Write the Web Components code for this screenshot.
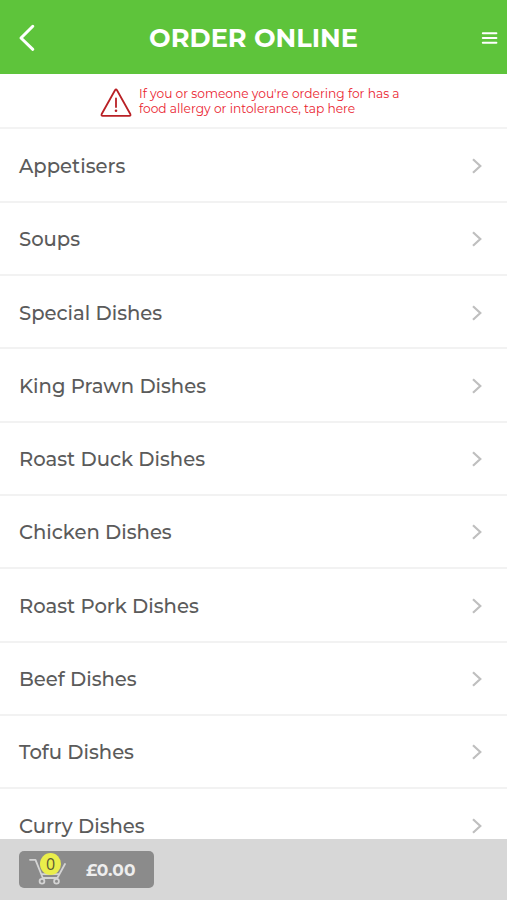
<!DOCTYPE html>
<html lang="en">
<head>
<meta charset="utf-8">
<title>Order Online</title>
<style>
html, body { margin: 0; height: 100%; overflow: hidden; background: #fff; }
body { font-family: Montserrat, Inter, "Liberation Sans", sans-serif; }
</style>
</head>
<body>
<order-app></order-app>
<script>
const define = (name, css, html) => customElements.define(name, class extends HTMLElement {
  constructor() {
    super();
    this.attachShadow({ mode: 'open' }).innerHTML = `<style>${css}</style>${html}`;
  }
});

define('app-header', `
:host { display: grid; grid-template-columns: 60px 1fr 60px; align-items: center; height: 74px; flex: none;
  box-sizing: border-box; background: #5ec43b; color: #fff; }
h1 { margin: 2px 0 0; text-align: center; font-size: 25.600px; line-height: 32px; font-weight: 700; white-space: nowrap; }
svg { display: block; fill: none; stroke: #fff; }
.back { margin: 2px 0 0 18px; }
.menu { margin: 2px 9px 0 auto; }
`, `
<svg class="back" width="18" height="28" viewBox="0 0 18 28" stroke-width="3" stroke-linecap="round" stroke-linejoin="round"><path d="M14.800 2.300 3 14l11.800 11.300"/></svg>
<h1><slot></slot></h1>
<svg class="menu" width="17" height="14" viewBox="0 0 17 14" stroke-width="2" stroke-linecap="round"><path d="M1.800 2.300h13.600M1.800 7h13.600M1.800 11.700h13.600"/></svg>
`);

define('allergy-notice', `
:host { display: flex; height: 55px; flex: none; box-sizing: border-box; padding: 0 0 0 100px; gap: 7px;
  align-items: center; border-bottom: 2px solid #f3f3f3; color: #ea2430; }
p { margin: 1px 0 0; font-size: 12.230px; line-height: 15px; white-space: nowrap; }
svg { display: block; margin-top: 4px; }
.line { display: block; }
`, `
<svg width="32" height="30" viewBox="0 0 32 30" fill="none" stroke="#b92025" stroke-width="1.800" stroke-linejoin="round" stroke-linecap="round"><path d="M15 2.300q1-1.600 2 0L30.300 26q.8 1.800-1 1.800H2.700q-1.800 0-1-1.800Z"/><path d="M16 10.500v8.500" stroke-width="1.800"/><path d="M16 22.700v.1" stroke-width="2.600"/></svg>
<p><span class="line"><slot name="first"></slot></span><span class="line"><slot name="second"></slot></span></p>
`);

define('menu-row', `
:host { display: flex; align-items: center; justify-content: space-between; height: 73.300px; flex: none;
  box-sizing: border-box; padding: 1.500px 24px 0 19px; border-bottom: 2px solid #f2f2f2; color: #5b5b5b;
  font-size: 19.600px; font-weight: 500; white-space: nowrap; }
svg { display: block; }
`, `
<span><slot></slot></span>
<svg width="12" height="18" viewBox="0 0 12 18" fill="none" stroke="#bfbfbf" stroke-width="2.200"><path d="M2 2.200 9.300 9 2 15.800"/></svg>
`);

define('cart-button', `
:host { display: flex; align-items: center; width: 135px; height: 37px; box-sizing: border-box; border-radius: 5px;
  background: #8b8b8b; color: #eee; padding-left: 9px; font-size: 17px; font-weight: 700; }
.icon { position: relative; width: 38px; height: 37px; flex: none; }
svg { display: block; }
.badge { position: absolute; left: 12px; top: 2px; width: 21px; height: 22px; border-radius: 50%;
  background: #eaee4b; color: #5a5a35; font-family: "Open Sans", sans-serif; font-size: 16px; line-height: 22px; font-weight: 400; text-align: center; }
.price { margin-left: 20px; }
`, `
<span class="icon">
<svg width="38" height="37" viewBox="0 0 38 37" fill="none" stroke="#d4d4d4" stroke-width="1.800" stroke-linecap="round" stroke-linejoin="round"><path d="M2 8.800h5.500l7.300 18.200h14.500l7.700-14M13.300 23.200h17.500"/><circle cx="14" cy="30.300" r="2.400"/><circle cx="28.500" cy="30.300" r="2.400"/></svg>
<span class="badge"><slot name="count"></slot></span></span>
<span class="price"><slot></slot></span>
`);

define('cart-bar', `
:host { display: flex; flex: none; height: 61px; align-items: center; box-sizing: border-box; padding-left: 19px; background: #d7d7d7; }
`, `<slot></slot>`);

define('order-app', `
:host { display: flex; flex-direction: column; height: 100vh; }
main { flex: 1; min-height: 0; overflow: hidden; display: flex; flex-direction: column; padding-top: .6px; }
`, `
<app-header>ORDER ONLINE</app-header>
<allergy-notice><span slot="first">If you or someone you're ordering for has a</span><span slot="second">food allergy or intolerance, tap here</span></allergy-notice>
<main>
<menu-row>Appetisers</menu-row>
<menu-row>Soups</menu-row>
<menu-row>Special Dishes</menu-row>
<menu-row>King Prawn Dishes</menu-row>
<menu-row>Roast Duck Dishes</menu-row>
<menu-row>Chicken Dishes</menu-row>
<menu-row>Roast Pork Dishes</menu-row>
<menu-row>Beef Dishes</menu-row>
<menu-row>Tofu Dishes</menu-row>
<menu-row>Curry Dishes</menu-row>
</main>
<cart-bar><cart-button><span slot="count">0</span>£0.00</cart-button></cart-bar>
`);
</script>
</body>
</html>
